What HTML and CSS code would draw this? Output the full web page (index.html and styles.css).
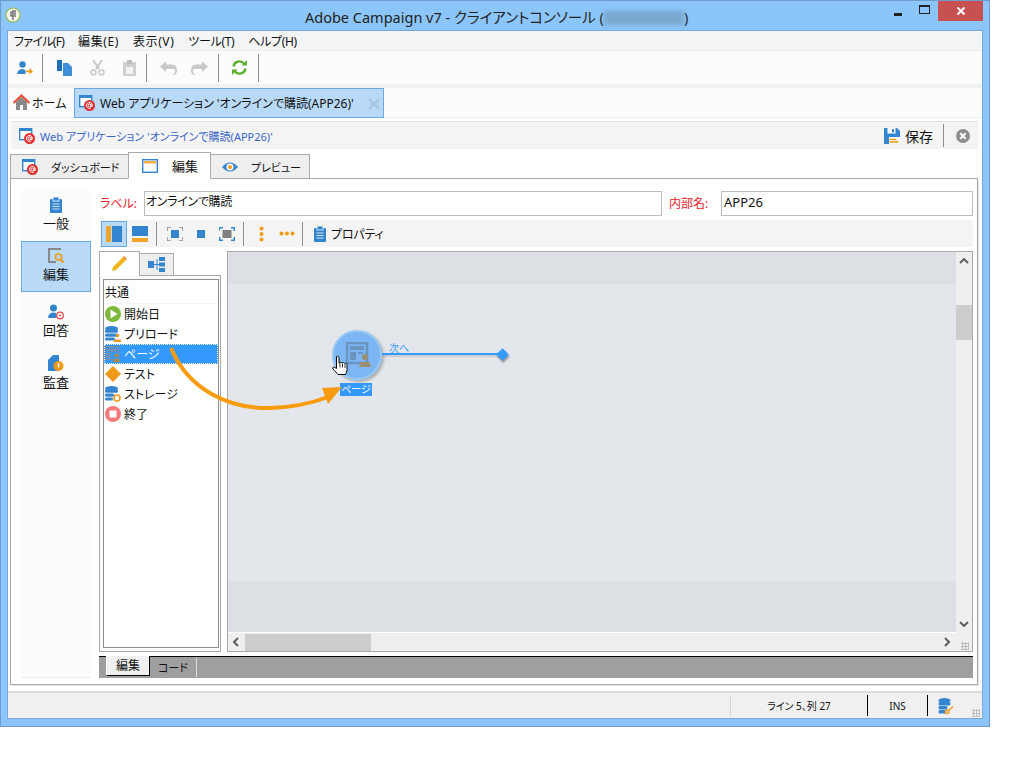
FILE: index.html
```html
<!DOCTYPE html>
<html lang="ja">
<head>
<meta charset="utf-8">
<title>Adobe Campaign v7</title>
<link rel="stylesheet" href="styles.css">
</head>
<body>
<svg class="defs" width="0" height="0">
  <defs>
    <symbol id="webapp" viewBox="0 0 16 16">
      <rect x="0.7" y="0.7" width="12" height="11" fill="#fff" stroke="#3485d0" stroke-width="1.4"/>
      <rect x="0" y="0" width="13" height="3" fill="#3485d0"/>
      <circle cx="10.5" cy="10.5" r="5.5" fill="#e52e2e"/>
      <circle cx="10.5" cy="10.5" r="1.5" fill="none" stroke="#fff"/>
      <path d="M12 9v2.5q1.4.6 1.4-1A3 3 0 1 0 12 13" fill="none" stroke="#fff"/>
    </symbol>
    <symbol id="clip" viewBox="0 0 12 16">
      <rect x="0" y="2" width="12" height="14" rx="1" fill="#3485d0"/>
      <rect x="3" y="0" width="6" height="4" fill="#3485d0" stroke="#fff" stroke-width=".8"/>
      <path d="M2.5 7h7M2.5 9.5h7M2.5 12h7" stroke="#cfe3f6" stroke-width="1"/>
    </symbol>
  </defs>
</svg>
<div class="window">
  <header class="titlebar">
    <svg class="applogo" width="16" height="16" viewBox="0 0 16 16"><circle cx="8" cy="8" r="7" fill="#f4f6ee" stroke="#9dbb45" stroke-width="1.2"/><path d="M8 3v10M8 5h-2v4h2M10 3v7" fill="none" stroke="#555" stroke-width="1.2"/></svg>
    <div class="title">Adobe Campaign v7 - クライアントコンソール (<span class="blurred"></span>)</div>
    <div class="winbtns">
      <span class="wb wb-min"><i></i></span>
      <span class="wb wb-max"><i></i></span>
      <span class="wb wb-close"><svg width="10" height="10" viewBox="0 0 10 10"><path d="M1.500 1.500l7 7M8.500 1.500l-7 7" stroke="#fff" stroke-width="2"/></svg></span>
    </div>
  </header>
  <div class="client">
    <nav class="menubar">
      <span class="m-file">ファイル(F)</span><span class="m-kanji">編集(E)</span><span class="m-kanji">表示(V)</span><span class="m-kana">ツール(T)</span><span class="m-kana">ヘルプ(H)</span>
    </nav>
    <div class="toolbar">
      <span class="tb tb-first"><svg width="16" height="14" viewBox="0 0 16 14"><circle cx="5.500" cy="3.500" r="3.200" fill="#3485d0"/><path d="M0 13q1-5 5.500-5q2 0 3 1.500v3.500z" fill="#3485d0"/><path d="M9 9.500h3.500v-2.500l3.500 3.500-3.500 3v-2.300H9z" fill="#f09a1a"/></svg></span>
      <i class="vsep"></i>
      <span class="tb tb-paste"><svg width="15" height="16" viewBox="0 0 15 16"><path d="M0 0h5v11H0z" fill="#1f6fb8"/><path d="M6 3h5l4 4v9H6z" fill="#3f8fd8"/></svg></span>
      <span class="tb tb-w"><svg width="15" height="16" viewBox="0 0 15 16"><path d="M3 0l6 9M12 0L6 9" stroke="#c9c9c9" stroke-width="2"/><circle cx="3.500" cy="12.500" r="2.500" fill="none" stroke="#c9c9c9" stroke-width="1.500"/><circle cx="11.500" cy="12.500" r="2.500" fill="none" stroke="#c9c9c9" stroke-width="1.500"/></svg></span>
      <span class="tb tb-w"><svg width="13" height="16" viewBox="0 0 13 16"><rect y="2" width="13" height="14" fill="#cfcfcf"/><rect x="4" width="5" height="4" fill="#bdbdbd"/><rect x="3" y="7" width="7" height="7" fill="#f2f2f2"/></svg></span>
      <i class="vsep"></i>
      <span class="tb tb-n"><svg width="17" height="14" viewBox="0 0 17 14"><path d="M6 0v3.500h5q6 0 6 5.500t-5 5q3-1 3-4t-4-2H6V11L0 5.500z" fill="#c9c9c9"/></svg></span>
      <span class="tb tb-w2"><svg width="17" height="14" viewBox="0 0 17 14"><path d="M11 0v3.500H6Q0 3.500 0 9t5 5q-3-1-3-4t4-2h5V11l6-5.500z" fill="#c9c9c9"/></svg></span>
      <i class="vsep"></i>
      <span class="tb tb-n"><svg width="15" height="15" viewBox="0 0 15 15"><path d="M1.500 6.500A6 6 0 0 1 12 3.500M13.500 8.500A6 6 0 0 1 3 11.500" fill="none" stroke="#5cae2e" stroke-width="2.400"/><path d="M9.500 5.500h5.500V0zM5.500 9.500H0V15z" fill="#5cae2e"/></svg></span>
      <i class="vsep vsep-last"></i>
    </div>
    <div class="tabstrip">
      <div class="home"><svg width="17" height="17" viewBox="0 0 17 17"><path d="M3 8v8h4v-5h3v5h4V8l-5.500-5z" fill="#8a8a8a"/><path d="M0.500 9L8.500 1.500l8 7.500" fill="none" stroke="#e8503a" stroke-width="2.200"/></svg><span>ホーム</span></div>
      <div class="doc-tab">
        <svg class="ic16" width="16" height="16"><use href="#webapp"/></svg>
        <span>Web アプリケーション 'オンラインで購読(APP26)'</span>
        <svg class="doc-x" width="12" height="12" viewBox="0 0 12 12"><path d="M1 1l10 10M11 1L1 11" stroke="#a8c4dc" stroke-width="2.400"/></svg>
      </div>
    </div>
    <div class="docarea">
      <div class="dochead">
        <svg class="ic16" width="16" height="16"><use href="#webapp"/></svg>
        <span class="docname">Web アプリケーション 'オンラインで購読(APP26)'</span>
        <span class="save"><svg width="16" height="16" viewBox="0 0 16 16"><path d="M0 0h13l3 3v13H0z" fill="#3485d0"/><rect x="3.500" width="8" height="5.500" fill="#fff"/><rect x="8" y="1" width="2" height="3.500" fill="#3485d0"/><rect x="5" y="9" width="11" height="7" fill="#fff"/><path d="M5.500 11.500h7M5.500 14h9" stroke="#f09a1a" stroke-width="1.500"/></svg>保存</span>
        <i class="vsep vsep-head"></i>
        <svg class="closecirc" width="14" height="14" viewBox="0 0 14 14"><circle cx="7" cy="7" r="7" fill="#8e8e8e"/><path d="M4.300 4.300l5.400 5.400M9.700 4.300l-5.400 5.400" stroke="#fff" stroke-width="2"/></svg>
      </div>
      <div class="viewtabs">
        <div class="vt vt-dash"><svg class="ic16" width="16" height="16"><use href="#webapp"/></svg><span>ダッシュボード</span></div>
        <div class="vt vt-on"><svg class="ic16" width="16" height="14" viewBox="0 0 16 14"><rect x=".7" y=".7" width="14.600" height="12.600" fill="#fff" stroke="#3485d0" stroke-width="1.400"/><rect x="2" y="2" width="12" height="2.500" fill="#f0b040"/></svg><span>編集</span></div>
        <div class="vt vt-prev"><svg class="ic16" width="16" height="12" viewBox="0 0 16 12"><path d="M0 6q8-9 16 0q-8 9-16 0z" fill="#3485d0"/><circle cx="8" cy="6" r="3.500" fill="#fff"/><circle cx="8" cy="6" r="2" fill="#f09a1a"/></svg><span>プレビュー</span></div>
      </div>
      <div class="panel">
        <aside class="side">
          <div class="si"><svg width="12" height="16"><use href="#clip"/></svg><span>一般</span></div>
          <div class="si si-on"><svg width="16" height="16" viewBox="0 0 16 16"><path d="M13 1H1v13h7" fill="none" stroke="#888" stroke-width="2"/><circle cx="10.500" cy="9" r="3" fill="none" stroke="#f09a1a" stroke-width="1.600"/><path d="M12.500 11.500l3 3" stroke="#f09a1a" stroke-width="2"/></svg><span>編集</span></div>
          <div class="si si-ans"><svg width="16" height="16" viewBox="0 0 16 16"><circle cx="5.500" cy="4" r="3.500" fill="#3485d0"/><path d="M0 14q.5-5.500 5.500-5.500 2 0 3 1v4.500z" fill="#3485d0"/><circle cx="12" cy="11.500" r="3.300" fill="none" stroke="#e04a4a" stroke-width="1.200"/><circle cx="12" cy="11.500" r="1" fill="#e04a4a"/></svg><span>回答</span></div>
          <div class="si"><svg width="16" height="17" viewBox="0 0 16 17"><path d="M0 5l5-5h6v16H0z" fill="#3485d0"/><circle cx="10.500" cy="11" r="5" fill="#f09a1a"/><rect x="9.800" y="8" width="1.500" height="4.500" fill="#fff"/></svg><span>監査</span></div>
        </aside>
        <div class="work">
          <div class="fields">
            <label class="lbl">ラベル:</label><div class="inp inp-label">オンラインで購読</div>
            <label class="lbl lbl2">内部名:</label><div class="inp inp-name">APP26</div>
          </div>
          <div class="edbar">
            <span class="eb eb-on"><svg width="16" height="16" viewBox="0 0 16 16"><rect width="5" height="16" fill="#f0a52a"/><rect x="6" width="10" height="16" fill="#3485d0"/></svg></span>
            <span class="eb"><svg width="16" height="16" viewBox="0 0 16 16"><rect width="16" height="10" fill="#3485d0"/><rect y="12" width="16" height="4" fill="#f0a52a"/></svg></span>
            <i class="vsep vsep-ed"></i>
            <span class="eb"><svg width="16" height="14" viewBox="0 0 16 14"><rect x="4" y="3" width="8" height="8" fill="#3485d0"/><path d="M0 4V0h4M12 0h4v4M16 10v4h-4M4 14H0v-4" fill="none" stroke="#8d8d8d" stroke-width="1.500"/></svg></span>
            <span class="eb"><svg width="16" height="14" viewBox="0 0 16 14"><rect x="4" y="3" width="8" height="8" fill="#3485d0"/></svg></span>
            <span class="eb"><svg width="16" height="14" viewBox="0 0 16 14"><rect x="3.500" y="3" width="9" height="8" fill="#808080"/><path d="M0 4V.7h4M12 .7h3.300V4M15.300 10v3.300H12M4 13.300H.7V10" fill="none" stroke="#3485d0" stroke-width="1.500"/></svg></span>
            <i class="vsep vsep-ed"></i>
            <span class="eb eb-dots"><svg width="5" height="16" viewBox="0 0 5 16"><circle cx="2.500" cy="2.500" r="2" fill="#f09a1a"/><circle cx="2.500" cy="8" r="2" fill="#f09a1a"/><circle cx="2.500" cy="13.500" r="2" fill="#f09a1a"/></svg></span>
            <span class="eb eb-dots2"><svg width="16" height="5" viewBox="0 0 16 5"><circle cx="2.500" cy="2.500" r="2" fill="#f09a1a"/><circle cx="8" cy="2.500" r="2" fill="#f09a1a"/><circle cx="13.500" cy="2.500" r="2" fill="#f09a1a"/></svg></span>
            <i class="vsep vsep-ed"></i>
            <span class="eb-prop"><svg width="12" height="16"><use href="#clip"/></svg>プロパティ</span>
          </div>
          <div class="split">
            <div class="palette">
              <div class="ptabs">
                <span class="pt pt-on"><svg width="15" height="15" viewBox="0 0 15 15"><path d="M0 15l1-4L11 1l3 3L4 14z" fill="#f2b41c"/><path d="M11 1l3 3 1-1-3-3z" fill="#f07a1a"/></svg></span>
                <span class="pt"><svg width="17" height="15" viewBox="0 0 17 15"><rect y="4" width="6" height="7" fill="#3485d0"/><rect x="11" width="6" height="4" fill="#3485d0"/><rect x="11" y="5.500" width="6" height="4" fill="#3485d0"/><rect x="11" y="11" width="6" height="4" fill="#3485d0"/><path d="M6 7.500h5M9 2v11" stroke="#3485d0"/></svg></span>
              </div>
              <div class="pbox">
                <div class="plist">
                  <div class="phead">共通</div>
                  <div class="pi"><svg class="ic16" width="16" height="16" viewBox="0 0 16 16"><circle cx="8" cy="8" r="8" fill="#7db83a"/><path d="M5.500 3.500l7 4.500-7 4.500z" fill="#fff"/></svg>開始日</div>
                  <div class="pi"><svg class="ic16" width="16" height="16" viewBox="0 0 16 16"><ellipse cx="6.500" cy="2.500" rx="6.500" ry="2.500" fill="#3485d0"/><rect y="3.500" width="13" height="3.200" rx="1.500" fill="#3485d0"/><rect y="7.500" width="13" height="3.200" rx="1.500" fill="#3485d0"/><rect y="11.500" width="10" height="3" rx="1.500" fill="#3485d0"/><circle cx="12.500" cy="9.500" r="1.800" fill="#f09a1a"/><path d="M8.500 16l1-2.500h6l1 2.500z" fill="#f09a1a"/></svg>プリロード</div>
                  <div class="pi pi-on"><svg class="ic16" width="16" height="16" viewBox="0 0 16 16"><rect x=".5" y=".5" width="13" height="13" fill="none" stroke="#7f8ea0" stroke-width="1.400"/><rect x="2.500" y="2.500" width="9" height="3" fill="#7f8ea0"/><rect x="2.500" y="7" width="3" height="5" fill="#7f8ea0"/><circle cx="11.500" cy="9.500" r="2" fill="#a88a4a"/><path d="M8 16l1-3h5l1 3z" fill="#a88a4a"/></svg>ページ</div>
                  <div class="pi"><svg class="ic16" width="16" height="16" viewBox="0 0 16 16"><path d="M8 0l8 8-8 8-8-8z" fill="#f09a1a"/></svg>テスト</div>
                  <div class="pi"><svg class="ic16" width="16" height="16" viewBox="0 0 16 16"><ellipse cx="6.500" cy="2.500" rx="6.500" ry="2.500" fill="#3485d0"/><rect y="3.500" width="13" height="3.200" rx="1.500" fill="#3485d0"/><rect y="7.500" width="9" height="3.200" rx="1.500" fill="#3485d0"/><rect y="11.500" width="8" height="3" rx="1.500" fill="#3485d0"/><circle cx="12" cy="12" r="3" fill="none" stroke="#f09a1a" stroke-width="1.600"/></svg>ストレージ</div>
                  <div class="pi"><svg class="ic16" width="16" height="16" viewBox="0 0 16 16"><circle cx="8" cy="8" r="8" fill="#f27a7a"/><rect x="4.500" y="4.500" width="7" height="7" fill="#fff"/></svg>終了</div>
                </div>
              </div>
            </div>
            <div class="canvas">
              <div class="scrollarea">
                <div class="stage">
                  <div class="band-top"></div>
                  <div class="band-mid"></div>
                  <div class="band-bot"></div>
                  <div class="node">
                    <svg width="26" height="26" viewBox="0 0 26 26"><rect x="1" y="1" width="20" height="20" fill="none" stroke="#6a94bf" stroke-width="2.500"/><rect x="4" y="4" width="14" height="4" fill="#6a94bf"/><rect x="4" y="10" width="6" height="8" fill="#6a94bf"/><rect x="12" y="10" width="5" height="2" fill="#6a94bf"/><circle cx="19" cy="15" r="3" fill="#9a8f72"/><path d="M13 25l1.500-5h9l1.500 5z" fill="#9a8f72"/></svg>
                  </div>
                  <div class="nodelabel">ページ</div>
                  <div class="edgelabel">次へ</div>
                  <div class="edge"></div>
                  <div class="edgeend"></div>
                </div>
                <div class="vscroll"><svg width="10" height="6" viewBox="0 0 10 6"><path d="M1 5l4-4 4 4" fill="none" stroke="#606060" stroke-width="2"/></svg><div class="vtrack"><div class="vthumb"></div></div><svg width="10" height="6" viewBox="0 0 10 6"><path d="M1 1l4 4 4-4" fill="none" stroke="#606060" stroke-width="2"/></svg></div>
              </div>
              <div class="hscroll"><svg width="6" height="10" viewBox="0 0 6 10"><path d="M5 1L1 5l4 4" fill="none" stroke="#606060" stroke-width="2"/></svg><div class="htrack"><div class="hthumb"></div></div><svg width="6" height="10" viewBox="0 0 6 10"><path d="M1 1l4 4-4 4" fill="none" stroke="#606060" stroke-width="2"/></svg><span class="grip"></span></div>
            </div>
          </div>
          <div class="codebar"><span class="cb cb-on">編集</span><span class="cb">コード</span></div>
        </div>
      </div>
    </div>
    <footer class="status">
      <i class="st-sep0"></i>
      <span class="st-pos">ライン 5、列 27</span>
      <i class="st-sep"></i>
      <span class="st-ins">INS</span>
      <i class="st-sep"></i>
      <svg class="st-db" width="16" height="16" viewBox="0 0 16 16"><ellipse cx="6.500" cy="2.500" rx="6" ry="2.500" fill="#3485d0"/><rect x=".5" y="4" width="12" height="3.500" rx="1.500" fill="#3485d0"/><rect x=".5" y="8" width="9" height="3.500" rx="1.500" fill="#3485d0"/><rect x=".5" y="12" width="8" height="3.500" rx="1.500" fill="#3485d0"/><circle cx="9" cy="14" r="1.800" fill="none" stroke="#f09a1a" stroke-width="1.400"/><path d="M10 13l5-4.500" stroke="#f09a1a" stroke-width="1.600"/></svg>
      <span class="grip grip-st"></span>
    </footer>
  </div>
</div>
<svg class="dragarrow" width="200" height="80" viewBox="0 0 200 80">
  <path d="M1 1C18 42 58 62 100 61Q132 60 158 50" fill="none" stroke="#f89c0e" stroke-width="4"/>
  <path d="M152 41L172 40 158 57z" fill="#f89c0e"/>
</svg>
<svg class="cursor" width="17" height="22" viewBox="0 0 17 22"><path d="M4.500 1.500c1-1 2.500 0 2.500 1V8h1c.6-.9 1.900-.6 2.200 0 .7-.7 2-.5 2.300.3.800-.5 2.500-.1 2.500 1v5.200c0 2-1 3.500-1.500 5H6C5 18 3 16.500 1 14c-.7-1.200 0-2.300 1.300-1.800l2.200 1.300z" fill="#fff" stroke="#000" stroke-width="1"/><path d="M8 8.500v4M10.500 8.500v4M13 9v4" stroke="#000" stroke-width=".8"/></svg>
</body>
</html>
```
FILE: styles.css
```css
* { box-sizing: border-box; }
html, body { margin: 0; padding: 0; background: #fff; }
body {
  position: relative;
  width: 1021px;
  height: 758px;
  overflow: hidden;
  font-family: "Noto Sans", "Noto Sans CJK JP", sans-serif;
  font-feature-settings: "palt";
  font-size: 12px;
  color: #111;
}
.defs { position: absolute; }
.ic16 { flex: none; }
.window {
  width: 990px;
  height: 727px;
  background: #8bc5f9;
  border: 1px solid #6f9ccb;
  display: flex;
  flex-direction: column;
}
.titlebar {
  height: 29px;
  flex: none;
  display: flex;
  align-items: flex-start;
  position: relative;
}
.applogo { margin: 6px 0 0 4px; }
.title {
  position: absolute;
  left: 304px;
  top: 5px;
  font-size: 14.5px;
  line-height: 22px;
  color: #222;
  white-space: nowrap;
}
.blurred {
  display: inline-block;
  width: 80px;
  height: 14px;
  vertical-align: -2px;
  background: #7ba8cf;
  filter: blur(2px);
}
.winbtns {
  margin-left: auto;
  margin-right: 6px;
  display: flex;
  align-items: flex-start;
}
.wb { display: flex; align-items: center; justify-content: center; height: 20px; }
.wb-min { width: 26px; }
.wb-min i { display: block; width: 8px; height: 3px; background: #222; margin-top: 6px; }
.wb-max { width: 27px; }
.wb-max i { display: block; height: 9px; border: 1px solid #222; border-top-width: 2px; margin-top: -3px; width: 11px; }
.wb-close { width: 45px; background: #c75050; }
.client {
  flex: 1;
  margin: 0 6px 7px 6px;
  background: #fff;
  border: 1px solid #79a9d8;
  display: flex;
  flex-direction: column;
  min-height: 0;
}
.menubar {
  height: 19px;
  background: #f4f5f7;
  display: flex;
  align-items: center;
  gap: 14px;
  padding-left: 6px;
  font-size: 12px;
  flex: none;
}
.m-file { letter-spacing: -0.7px; }
.m-kanji { letter-spacing: 0.6px; }
.m-kana { letter-spacing: -0.35px; }
.toolbar {
  height: 38px;
  flex: none;
  background: #fcfcfc;
  border-top: 1px solid #ececec;
  border-bottom: 4px solid #eef0f4;
  display: flex;
  align-items: center;
  padding-left: 9px;
}
.tb { display: flex; align-items: center; justify-content: center; }
.tb-first { margin-right: 9px; }
.tb-paste { margin-left: 14px; }
.tb-w { margin-left: 18px; }
.tb-w + .vsep { margin-left: 10px; }
.tb-n { margin-left: 13px; }
.tb-w2 { margin-left: 14px; }
.vsep { display: block; width: 1px; height: 28px; background: #8f8f8f; flex: none; }
.tb-w2 + .vsep { margin-left: 10px; }
.tb-n + .vsep-last { margin-left: 11px; }
.tabstrip {
  height: 30px;
  flex: none;
  background: #fcfcfc;
  border-bottom: 1px solid #e8eefa;
  display: flex;
  align-items: stretch;
}
.home {
  width: 66px;
  display: flex;
  align-items: center;
  padding-left: 5px;
  gap: 2px;
  font-size: 12px;
}
.doc-tab {
  width: 310px;
  background: #b8daf8;
  border: 1px solid #6ea8e0;
  margin-bottom: -1px;
  display: flex;
  align-items: center;
  padding-left: 4px;
  gap: 5px;
  font-size: 12px;
  white-space: nowrap;
  position: relative;
}
.doc-x { position: absolute; top: 9px; right: 3px; }
.docarea {
  flex: 1;
  min-height: 0;
  padding: 3px 3px 0 3px;
  background: #fff;
  display: flex;
  flex-direction: column;
}
.dochead {
  height: 28px;
  flex: none;
  background: #f4f4f4;
  border-top: 1px solid #e2e2e2;
  display: flex;
  align-items: center;
  padding-left: 8px;
  margin-right: 1px;
}
.docname { color: #3a64c8; font-size: 11px; margin-left: 5px; white-space: nowrap; }
.save {
  margin-left: auto;
  display: flex;
  align-items: center;
  gap: 5px;
  font-size: 14px;
  color: #111;
}
.vsep-head { height: 23px; margin: 0 12px 0 10px; }
.closecirc { margin-right: 8px; }
.viewtabs {
  height: 27px;
  margin-top: 3px;
  margin-left: -1px;
  flex: none;
  display: flex;
  align-items: flex-end;
  position: relative;
  z-index: 1;
  margin-bottom: -1px;
}
.vt {
  height: 25px;
  display: flex;
  align-items: center;
  background: #eeeeee;
  border: 1px solid #a9a9a9;
  font-size: 11px;
  padding-left: 11px;
  white-space: nowrap;
}
.vt-dash { width: 118px; gap: 13px; border-right: none; }
.vt-on { width: 83px; height: 27px; background: #fff; border-bottom-color: #fff; gap: 14px; font-size: 13px; padding-left: 13px; }
.vt-prev { width: 99px; gap: 13px; border-left: none; }
.panel {
  flex: 1;
  min-height: 0;
  margin-right: 1px;
  margin-left: -1px;
  border: 1px solid #a9a9a9;
  box-shadow: 1px 1px 0 #e6e6e6;
  display: flex;
  padding: 11px 4px 6px 10px;
}
.side {
  width: 70px;
  flex: none;
  background: #fcfcfc;
  border-bottom: 1px solid #e3f0fb;
  display: flex;
  flex-direction: column;
  align-items: stretch;
  padding-top: 7px;
}
.si {
  display: flex;
  flex-direction: column;
  align-items: center;
  height: 51px;
  gap: 1px;
  font-size: 13px;
  line-height: 18px;
}
.si:first-child { height: 44px; }
.si-on {
  background: #b8daf8;
  border: 1px solid #6ea8e0;
  padding-top: 6px;
  height: 51px;
}
.si-ans { margin-top: 12px; }
.work {
  flex: 1;
  min-width: 0;
  margin-left: 8px;
  display: flex;
  flex-direction: column;
}
.fields {
  height: 26px;
  flex: none;
  display: flex;
  align-items: center;
  margin-bottom: 4px;
}
.lbl { color: #e8222a; font-size: 12px; width: 45px; padding-left: 1px; flex: none; }
.lbl2 { width: 59px; padding-left: 7px; }
.inp {
  height: 25px;
  border: 1px solid #bdbdbd;
  background: #fff;
  font-size: 12px;
  line-height: 20px;
  padding-left: 1px;
  letter-spacing: -0.3px;
}
.inp-label { width: 518px; }
.inp-name { flex: 1; padding-left: 2px; font-size: 13px; letter-spacing: 0; }
.edbar {
  height: 27px;
  flex: none;
  background: #f4f4f4;
  display: flex;
  align-items: center;
  padding-left: 1px;
  margin-left: 1px;
}
.eb { width: 26px; height: 26px; display: flex; align-items: center; justify-content: center; flex: none; }
.eb-on { background: #b8daf8; border: 1px solid #6ea8e0; }
.vsep-ed { height: 24px; margin: 0 5px 0 3px; }
.eb-dots { margin-left: -1px; }
.eb-dots2 { width: 25px; }
.eb-prop { display: flex; align-items: center; gap: 5px; margin-left: 6px; font-size: 12px; letter-spacing: -0.2px; }
.split {
  flex: 1;
  min-height: 0;
  display: flex;
  margin-top: 4px;
}
.palette {
  width: 122px;
  flex: none;
  margin-right: 6px;
  display: flex;
  flex-direction: column;
}
.ptabs { height: 25px; flex: none; display: flex; align-items: flex-end; position: relative; z-index: 1; margin-bottom: -1px; }
.pt { display: flex; align-items: center; justify-content: center; background: #eeeeee; border: 1px solid #a9a9a9; height: 23px; width: 35px; margin-left: -1px; }
.pt-on { background: #fff; width: 41px; height: 25px; border-bottom-color: #fff; margin-left: 0; }
.pbox {
  flex: 1;
  min-height: 0;
  border: 1px solid #a9a9a9;
  padding: 3px 1px 3px 3px;
  background: #fbfbfb;
}
.plist {
  height: 100%;
  border: 1px solid #8f8f98;
  background: #fff;
}
.phead { height: 24px; line-height: 25px; padding-left: 1px; font-size: 12px; border-bottom: 1px solid #f0f3f8; }
.pi {
  height: 20px;
  display: flex;
  align-items: center;
  gap: 3px;
  padding-left: 1px;
  font-size: 12px;
}
.pi-on {
  background: #3399ff;
  color: #fff;
  outline: 1px dotted #fff;
  outline-offset: -1px;
}
.canvas {
  flex: 1;
  min-width: 0;
  border: 1px solid #a9a9a9;
  background: #efefef;
  display: flex;
  flex-direction: column;
}
.scrollarea { flex: 1; min-height: 0; display: flex; }
.stage {
  flex: 1;
  position: relative;
  display: flex;
  flex-direction: column;
  border-bottom: 1px solid #fff;
}
.band-top { height: 32px; background: #dcdfe3; }
.band-mid { flex: 1; background: #e3e6ea; }
.band-bot { height: 50px; background: #dcdfe3; }
.node {
  position: absolute;
  left: 104px;
  top: 78px;
  width: 50px;
  height: 50px;
  border-radius: 50%;
  background: #7db6f2;
  border: 2px solid #96c8f6;
  box-shadow: 2px 2px 3px rgba(0,0,0,.25);
  display: flex;
  align-items: center;
  justify-content: center;
  padding-left: 3px;
}
.nodelabel {
  position: absolute;
  left: 112px;
  top: 131px;
  width: 32px;
  height: 13px;
  background: #3399ff;
  color: #fff;
  font-size: 10px;
  line-height: 13px;
  text-align: center;
  white-space: nowrap;
}
.edgelabel {
  position: absolute;
  left: 161px;
  top: 90px;
  font-size: 10px;
  line-height: 12px;
  color: #3399ff;
}
.edge {
  position: absolute;
  left: 154px;
  top: 101px;
  width: 118px;
  height: 2px;
  background: #3399ff;
  box-shadow: 1px 2px 1px rgba(0,0,0,.12);
}
.edgeend {
  position: absolute;
  left: 270px;
  top: 98px;
  width: 9px;
  height: 9px;
  background: #3399ff;
  transform: rotate(45deg);
  box-shadow: 2px 1px 2px rgba(0,0,0,.35);
}
.vscroll {
  width: 16px;
  flex: none;
  background: #efefef;
  display: flex;
  flex-direction: column;
  align-items: center;
  padding: 6px 0;
}
.vtrack { flex: 1; width: 16px; display: flex; flex-direction: column; padding-top: 41px; }
.vthumb { width: 16px; height: 35px; background: #cdcdcd; }
.hscroll {
  height: 18px;
  flex: none;
  display: flex;
  align-items: center;
  padding-left: 5px;
  position: relative;
}
.htrack { flex: 1; height: 17px; margin: 0 4px; display: flex; }
.hthumb { width: 126px; height: 17px; background: #cdcdcd; margin-left: 2px; }
.hscroll > svg:nth-of-type(2) { margin-right: 22px; }
.grip {
  position: absolute;
  right: 3px;
  bottom: 1px;
  width: 8px;
  height: 8px;
  background-image: radial-gradient(circle, #bdbdbd 1px, transparent 1.2px);
  background-size: 3px 3px;
}
.codebar {
  height: 22px;
  flex: none;
  margin-top: 4px;
  background: #9f9f9f;
  border-top: 1px solid #000;
  display: flex;
  align-items: flex-start;
  padding-left: 7px;
}
.cb { height: 19px; line-height: 19px; font-size: 11px; padding: 0 8px; color: #111; border-right: 1px solid #ddd; margin-top: 1px; }
.cb-on { width: 44px; height: 20px; margin-top: -1px; text-align: center; font-size: 12px; background: #f0f0f0; border-right: 1px solid #000; border-bottom: 1px solid #000; border-left: 1px solid #fff; }
.status {
  height: 27px;
  flex: none;
  margin-top: 6px;
  background: #f0f0f0;
  border-top: 2px solid #dcdcdc;
  display: flex;
  align-items: center;
  position: relative;
  font-size: 10px;
}
.st-sep0 { display: block; width: 1px; height: 20px; background: #d5d5d5; margin-left: 722px; }
.st-pos { width: 136px; text-align: center; }
.st-sep { display: block; width: 1px; height: 21px; background: #000; flex: none; }
.st-ins { width: 59px; text-align: center; }
.st-db { margin-left: 10px; }
.grip-st { right: 2px; bottom: 1px; }
.dragarrow {
  position: absolute;
  left: 170px;
  top: 347px;
  pointer-events: none;
}
.cursor {
  position: absolute;
  left: 332px;
  top: 355px;
}
```
